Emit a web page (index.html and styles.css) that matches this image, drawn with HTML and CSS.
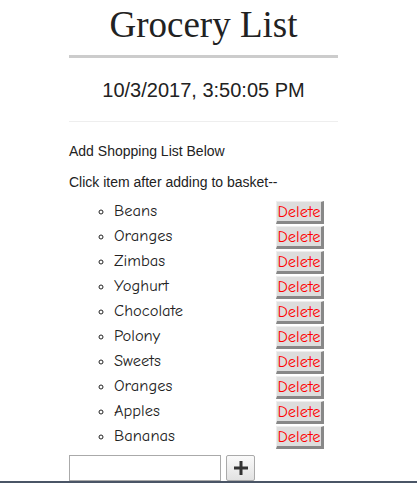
FILE: index.html
```html
<!DOCTYPE html>
<html>
<head>
<meta charset="utf-8">
<link rel="stylesheet" href="styles.css">
</head>
<body>
<div class="container">
  <h1 class="title">Grocery List</h1>
  <hr class="thick">
  <p class="date">10/3/2017, 3:50:05 PM</p>
  <hr class="thin">
  <p class="note first">Add Shopping List Below</p>
  <p class="note">Click item after adding to basket--</p>
  <ul class="items">
    <li><span class="name">Beans</span><button class="del">Delete</button></li>
    <li><span class="name">Oranges</span><button class="del">Delete</button></li>
    <li><span class="name">Zimbas</span><button class="del">Delete</button></li>
    <li><span class="name">Yoghurt</span><button class="del">Delete</button></li>
    <li><span class="name">Chocolate</span><button class="del">Delete</button></li>
    <li><span class="name">Polony</span><button class="del">Delete</button></li>
    <li><span class="name">Sweets</span><button class="del">Delete</button></li>
    <li><span class="name">Oranges</span><button class="del">Delete</button></li>
    <li><span class="name">Apples</span><button class="del">Delete</button></li>
    <li><span class="name">Bananas</span><button class="del">Delete</button></li>
  </ul>
  <div class="add">
    <input class="field" type="text">
    <button class="plus"><svg width="14" height="14" viewBox="0 0 14 14"><path d="M5.5 0h3v5.5H14v3H8.5V14h-3V8.5H0v-3h5.5z" fill="#333"/></svg></button>
  </div>
</div>
<div class="footer"></div>
</body>
</html>
```
FILE: styles.css
```css
html, body {
  margin: 0;
  padding: 0;
  background: #fff;
}
body {
  font-family: "Liberation Sans", Arial, sans-serif;
  color: #333;
  overflow: hidden;
}
.container {
  margin-left: 69px;
  width: 269px;
}
.title {
  font-family: "Liberation Serif", "DejaVu Serif", serif;
  font-weight: normal;
  font-size: 37px;
  line-height: 46px;
  text-align: center;
  margin: 2px 0 0 0;
  color: #222;
}
hr.thick {
  border: 0;
  height: 3px;
  background: #ccc;
  margin: 7px 0 0 0;
}
.date {
  font-size: 20px;
  line-height: 24px;
  text-align: center;
  margin: 20px 0 0 0;
  color: #222;
}
hr.thin {
  border: 0;
  height: 1px;
  background: #eee;
  margin: 19px 0 0 0;
}
.note {
  font-size: 14px;
  line-height: 16px;
  margin: 0;
  color: #222;
}
.note.first {
  margin-top: 21px;
}
.note + .note {
  margin-top: 15px;
}
.items {
  list-style: circle;
  margin: 10px 0 0 0;
  padding: 0 0 0 45px;
  font-family: "Comic Sans MS", "Comic Neue", cursive;
  font-size: 16.5px;
  color: #222;
}
.items li {
  height: 25px;
  position: relative;
}
.items li::marker {
  font-size: 14px;
}
.name {
  line-height: 22px;
}
.del {
  float: right;
  margin: 1px 14px 0 0;
  width: 48px;
  height: 23px;
  padding: 0;
  font-family: "Comic Sans MS", "Comic Neue", cursive;
  font-size: 16.5px;
  line-height: 18px;
  color: #f00;
  background: #ddd;
  border-style: solid;
  border-width: 1px 3px 3px 1px;
  border-color: #eee #888 #888 #eee;
  overflow: hidden;
}
.add {
  display: flex;
  gap: 5px;
  margin-top: 5px;
}
.field {
  width: 152px;
  height: 26px;
  box-sizing: border-box;
  border: 1px solid #aaa;
  margin: 0;
  padding: 0 4px;
}
.plus {
  width: 29px;
  height: 26px;
  box-sizing: border-box;
  border: 1px solid #aaa;
  border-radius: 2px;
  background: linear-gradient(#fafafa, #e2e2e2);
  padding: 0;
  display: flex;
  align-items: center;
  justify-content: center;
}
.footer {
  border-top: 2px solid #4a5566;
}
```
